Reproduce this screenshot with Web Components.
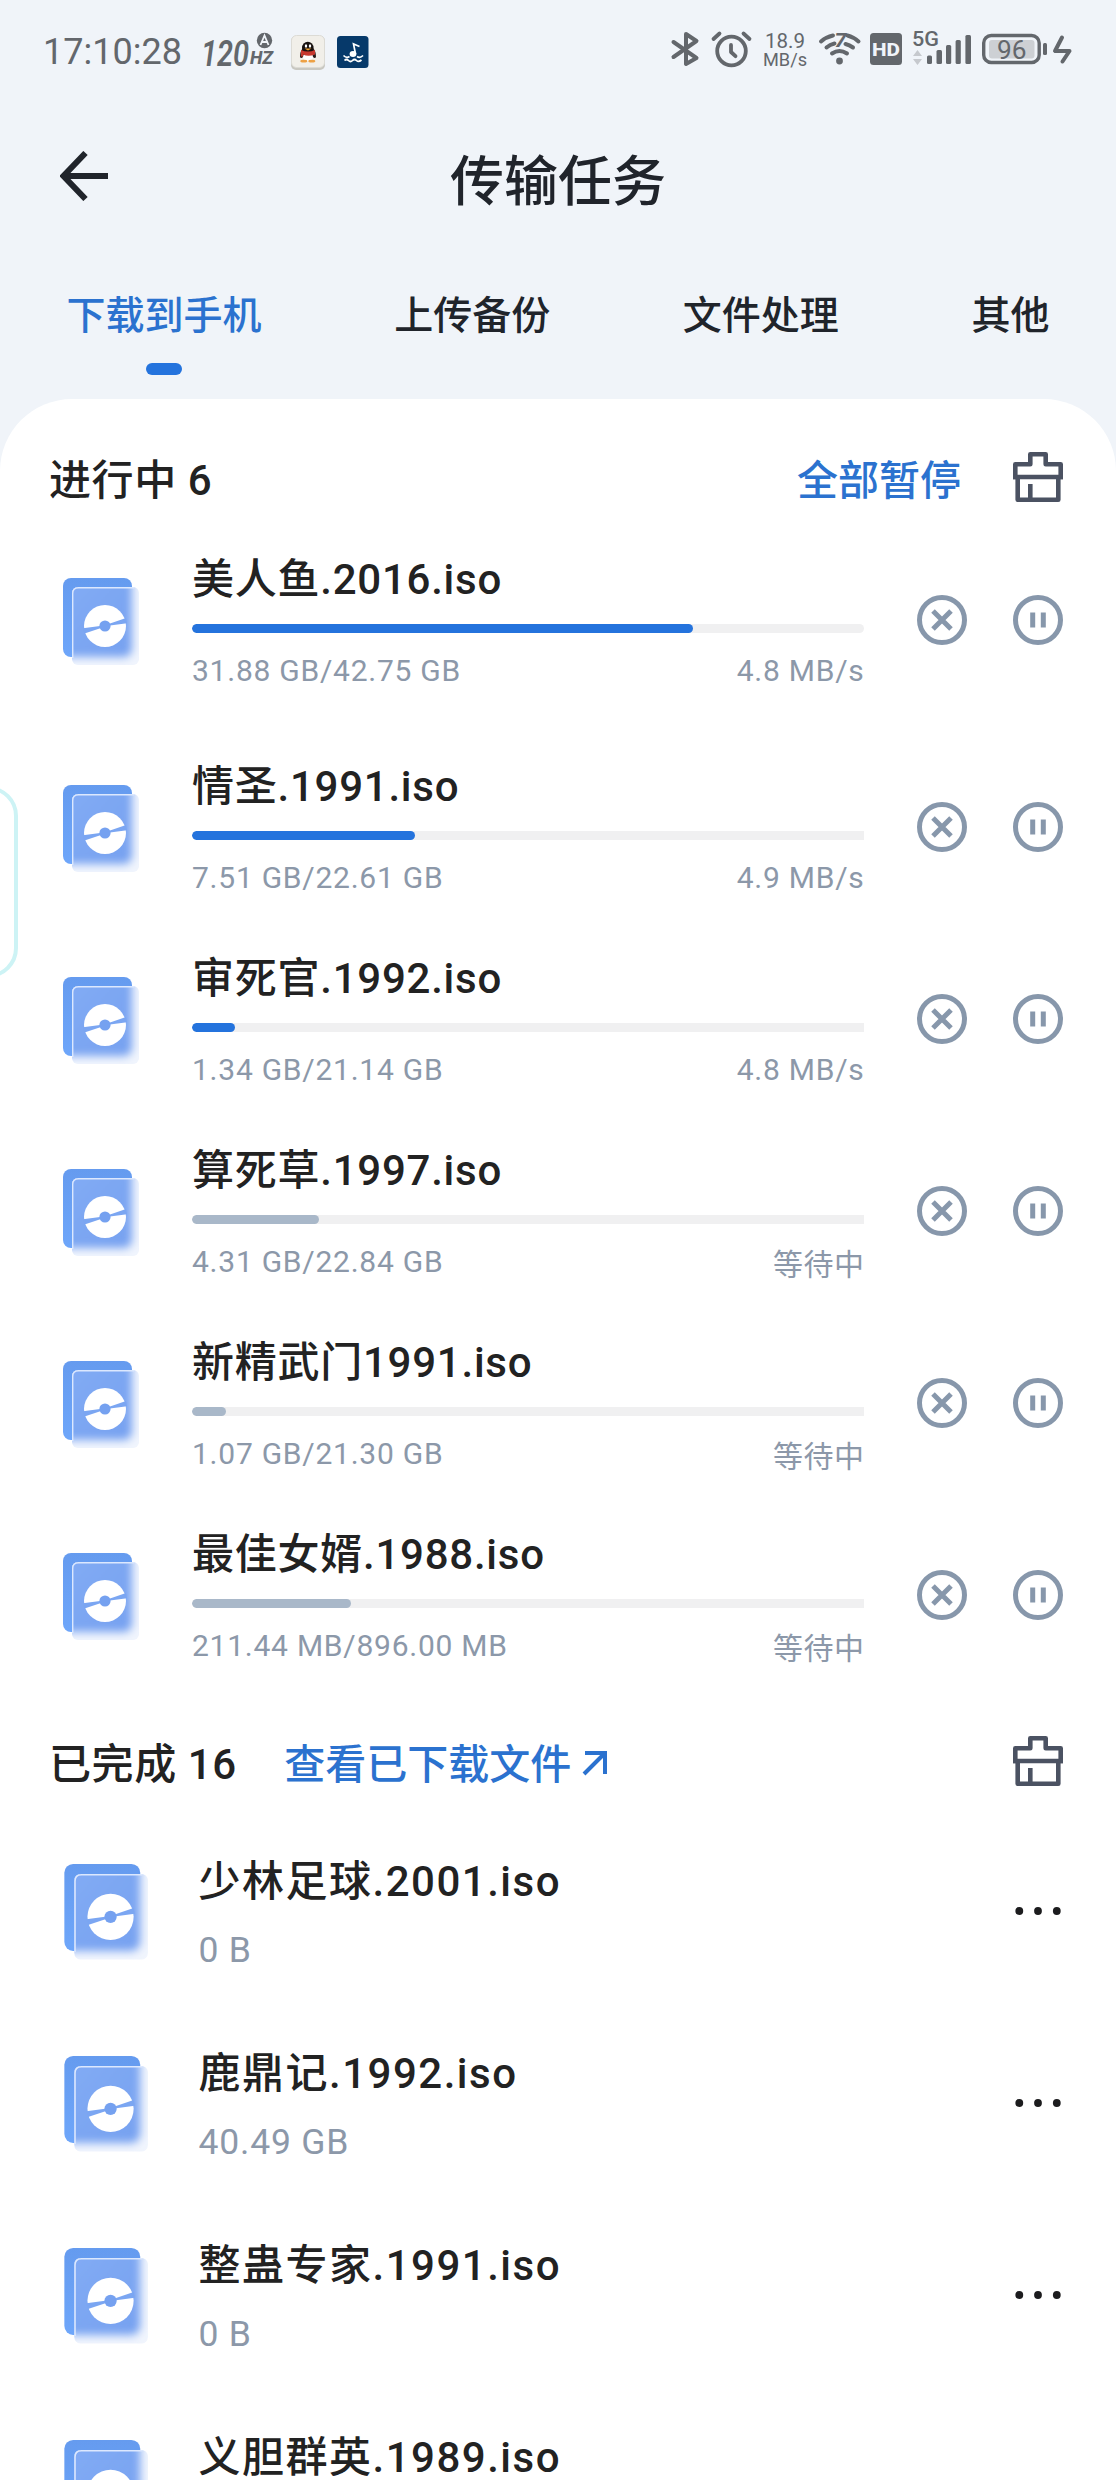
<!DOCTYPE html>
<html lang="zh-CN">
<head>
<meta charset="utf-8">
<title>传输任务</title>
<style>
html,body{margin:0;padding:0}
body{width:1116px;height:2480px;overflow:hidden;background:#f0f4f9;font-family:Roboto,"Noto Sans CJK SC",sans-serif;color:#222;position:relative}
</style>
</head>
<body>
<transfer-app></transfer-app>
<script>
const define = (name, html) => {
  const t = document.createElement('template');
  t.innerHTML = html;
  customElements.define(name, class extends HTMLElement {
    constructor() {
      super();
      this.attachShadow({mode: 'open'}).append(t.content.cloneNode(true));
    }
    connectedCallback() {
      const p = this.getAttribute('progress');
      if (p) this.style.setProperty('--p', p + '%');
    }
  });
};

define('status-bar', `
<style>
:host{display:flex;justify-content:space-between;height:100px;color:#63676c}
svg{display:block;font-family:Roboto,sans-serif}
</style>
<svg width="400" height="100" viewBox="0 0 400 100" fill="#63676c">
  <text x="43" y="64" font-size="36.5" textLength="139" lengthAdjust="spacingAndGlyphs">17:10:28</text>
  <text x="201" y="65.500" font-size="37" font-weight="600" font-style="italic" textLength="48" lengthAdjust="spacingAndGlyphs">120</text>
  <text x="250" y="64" font-size="18" font-weight="800" font-style="italic" textLength="23" lengthAdjust="spacingAndGlyphs">HZ</text>
  <circle cx="264.500" cy="40.500" r="7.700"/>
  <path d="M260.500 45L264.500 35.500L268.500 45M262 42H267" fill="none" stroke="#f0f4f9" stroke-width="1.800"/>
  <rect x="291" y="36" width="34" height="34" rx="5" fill="#c9c8c1"/>
  <rect x="291.500" y="35.500" width="33" height="32" rx="5" fill="#f1efe9" stroke="#dcdbd5"/>
  <g>
    <path d="M300 57q0-6 3-9h10q3 3 3 9q-1 2-3 0h-10q-2 2-3 0z" fill="#2a1a18"/>
    <ellipse cx="307.800" cy="48" rx="5.800" ry="6.300" fill="#17110f"/>
    <ellipse cx="308" cy="57" rx="5" ry="4.500" fill="#fff"/>
    <ellipse cx="306" cy="46" rx="1.200" ry="1.800" fill="#fff"/><ellipse cx="310" cy="46" rx="1.200" ry="1.800" fill="#fff"/>
    <path d="M301 50q7 3 14 0v4.500q-7 2.500-12 0v2h-2z" fill="#c8392f"/>
    <path d="M304.500 48.500h7l-3.500 2z" fill="#f0a030"/>
    <ellipse cx="303.800" cy="61.200" rx="3.500" ry="1.400" fill="#eda144"/><ellipse cx="311.800" cy="61.200" rx="3.500" ry="1.400" fill="#eda144"/>
  </g>
  <rect x="337" y="36" width="31.500" height="32" rx="3.500" fill="#06396a"/>
  <g fill="none" stroke="#fff" stroke-width="1.700">
    <path d="M355.500 54L353.500 44L359.500 46.500"/>
    <path d="M343.500 55.500q3 3 6 1M357 56.500q3 2 6-1M344.500 60.500q2-2 4 0t4 0t4 0t5-.5"/>
  </g>
  <ellipse cx="353" cy="54" rx="3.400" ry="2.900" fill="#fff"/>
</svg>
<svg width="476" height="100" viewBox="640 0 476 100" fill="#63676c">
  <path d="M673.500 42L696.500 58L686 64V34L696.500 41L673.500 57" fill="none" stroke="#63676c" stroke-width="4" stroke-linejoin="round" stroke-linecap="round"/>
  <g fill="none" stroke="#63676c" stroke-width="3.800" stroke-linecap="round" stroke-linejoin="round">
    <circle cx="731.500" cy="51" r="14.300"/><path d="M731 45v7l4.500 4.200M713.500 39l6-5.500M749.500 39l-6-5.500"/>
  </g>
  <text x="765" y="48" font-size="20" textLength="40" lengthAdjust="spacingAndGlyphs">18.9</text>
  <text x="763" y="65.500" font-size="18" textLength="44" lengthAdjust="spacingAndGlyphs">MB/s</text>
  <g fill="none" stroke="#63676c" stroke-width="4" stroke-linecap="round">
    <path d="M821 41.500q5-4.500 12-6M847.500 35.500q6 1.500 11 6M826.500 47.500q3.500-3 8-4M845.500 44q4 1 7.500 3.500M832 53.500q7.500-5 15 0"/>
  </g>
  <circle cx="839.500" cy="61" r="3.400"/>
  <text x="834.500" y="46.500" font-size="20" font-weight="800" font-style="italic" textLength="12" lengthAdjust="spacingAndGlyphs">7</text>
  <rect x="870" y="33" width="32" height="32" rx="3.500"/>
  <text x="872" y="56" font-size="19" font-weight="800" fill="#f0f4f9" textLength="28" lengthAdjust="spacingAndGlyphs">HD</text>
  <text x="912" y="46" font-size="20" font-weight="500" textLength="27" lengthAdjust="spacingAndGlyphs">5G</text>
  <path d="M913 56l4.500-6l4.500 6zM913 59h9l-4.500 6z" fill="#c6c9ce"/>
  <g><rect x="927" y="55.500" width="5" height="8.500" rx="1.500"/><rect x="936.500" y="50" width="5.500" height="14" rx="1.500"/><rect x="946" y="45" width="5.200" height="19" rx="1.500"/><rect x="955.600" y="40" width="5.200" height="24" rx="1.500"/><rect x="965.400" y="35" width="5.600" height="29" rx="1.500"/></g>
  <rect x="983.700" y="35.500" width="55.500" height="27" rx="7.500" fill="none" stroke="#63676c" stroke-width="3.400"/>
  <rect x="989" y="40" width="45.500" height="18.500" rx="3" fill="#cdd0d4"/>
  <rect x="1043" y="43" width="4" height="12" rx="1.500"/>
  <text x="997" y="58.500" font-size="26" textLength="29.500" lengthAdjust="spacingAndGlyphs">96</text>
  <path d="M1062 37.500l-7 13.500h14.500l-7 10.500" fill="none" stroke="#63676c" stroke-width="4" stroke-linejoin="round" stroke-linecap="round"/>
</svg>`);

define('title-bar', `
<style>
:host{display:grid;grid-template-columns:1fr auto 1fr;align-items:center;height:165px}
svg{display:block;margin:0 0 13px 60px}
h1{margin:0;font-size:54px;line-height:70px;font-weight:500;color:#20242b}
</style>
<svg width="50" height="50" viewBox="0 0 50 50" fill="none" stroke="#20242b" stroke-width="6"><path d="M25.500 2L3.500 25L25.500 48M4 25H48"/></svg>
<h1><slot></slot></h1><span></span>`);

define('tab-item', `
<style>
:host{display:flex;flex-direction:column;align-items:center;font-size:39px;line-height:50px;font-weight:500;color:#20242b;white-space:nowrap}
i{display:none;width:36px;height:12px;border-radius:6px;margin-top:22px;background:#2473dd}
:host([active]){color:#2b72cf}
:host([active]) i{display:block}
</style><span><slot></slot></span><i></i>`);

define('tab-bar', `
<style>
:host{display:flex;justify-content:space-between;align-items:flex-start;box-sizing:border-box;height:134px;padding:26px 66.500px 0 66.500px}
</style><slot></slot>`);

define('clear-icon', `
<style>:host{display:block}svg{display:block}</style>
<svg width="50" height="50" viewBox="0 0 50 50" fill="none" stroke="#4b5262" stroke-width="4.600" stroke-linejoin="round">
<path d="M2.300 27.300V12.300H17.300V2.300H32.700V12.300H47.700V27.300"/><path d="M0 25H50"/><path d="M4.700 25V47.700H45.300V25M17.300 32V47"/></svg>`);

define('section-head', `
<style>
:host{display:flex;align-items:center;box-sizing:border-box;height:156px;padding:0 53px 0 49px;font-size:42px;line-height:50px;font-weight:500}
:host([compact]){height:78px}
.t,.l{padding-top:8px;white-space:nowrap}
.t{color:#222;letter-spacing:.6px}
.l{display:flex;align-items:center;font-size:41px;color:#2b72cf;margin:0 52px 0 auto}
:host([compact]) .l{margin:0 auto 0 47.500px}
</style>
<span class="t"><slot></slot></span><span class="l"><slot name="link"></slot></span><clear-icon></clear-icon>`);

define('disc-icon', `
<style>:host{display:block;width:88px;height:100px}svg{display:block;width:100%;height:100%;overflow:visible}</style>
<svg viewBox="0 0 88 100">
<defs>
<linearGradient id="b" x1="0" y1="0" x2="0" y2="1"><stop offset="0" stop-color="#659bef"/><stop offset="1" stop-color="#6ea6fa"/></linearGradient>
<linearGradient id="f" x1="0" y1="0" x2="1" y2="1"><stop offset="0" stop-color="#84adf5"/><stop offset="1" stop-color="#76a1f0"/></linearGradient>
<filter id="s" x="-20%" y="-20%" width="140%" height="140%"><feGaussianBlur stdDeviation="4"/></filter>
<clipPath id="c"><rect x="19" y="19" width="67" height="78" rx="6"/></clipPath>
</defs>
<rect x="10" y="10" width="69" height="79" rx="8" fill="url(#b)"/>
<g clip-path="url(#c)"><rect x="19" y="19" width="67" height="78" fill="#f1f5fd"/><rect x="5" y="5" width="74" height="84" rx="8" fill="url(#f)" filter="url(#s)"/></g>
<path d="M19.700 90V25.500q0-5.800 5.800-5.800H81" fill="none" stroke="#dce8fe" stroke-width="1.400"/>
<circle cx="52" cy="58" r="21" fill="#fff"/>
<path d="M30 60.200L47 58L48 60L31.500 65.500ZM57 55.500L73 50L74 55.300L57 57.500Z" fill="#7ba6f2"/>
<circle cx="52" cy="58" r="5.600" fill="#75a1f0"/>
</svg>`);

define('transfer-row', `
<style>
:host{display:flex;align-items:flex-start;height:192px;--c:#2473dd}
:host([waiting]){--c:#a9b8c9}
:host(:first-of-type){margin-bottom:15px}
disc-icon{margin:13px 51px 0 53px;flex:none}
.m{width:672px;flex:none}
.n{font-size:42px;line-height:50px;font-weight:500;letter-spacing:.750px;color:#222;white-space:nowrap}
.b{height:9px;margin:19px 0 18px;border-radius:4.500px 0 0 4.500px;background:#f0f0f1;overflow:hidden}
:host(:first-of-type) .b{border-radius:4.500px}
.b i{display:block;height:9px;width:var(--p);border-radius:4.500px;background:var(--c)}
.s{display:flex;justify-content:space-between;font-size:30px;line-height:40px;letter-spacing:.75px;color:#8c98a9;white-space:nowrap}
.s span:last-child{margin-right:-.5px}
:host([waiting]) .s span:last-child{letter-spacing:.5px;padding-top:3px;height:37px}
.a{display:block;flex:none;margin:40px 0 0 53px}
</style>
<disc-icon></disc-icon>
<div class="m"><div class="n"><slot></slot></div><div class="b"><i></i></div>
<div class="s"><span><slot name="size"></slot></span><span><slot name="state"></slot></span></div></div>
<svg class="a" width="146" height="50" viewBox="0 0 146 50" fill="none" stroke="#8797ab" stroke-width="5"><circle cx="25" cy="25" r="22.500"/><path d="M16 16L34 34M34 16L16 34"/><circle cx="121" cy="25" r="22.500"/><path d="M115.700 17.500V32.500M126.300 17.500V32.500"/></svg>`);

define('done-row', `
<style>
:host{display:flex;align-items:flex-start;height:192px}
disc-icon{width:97.500px;height:110px;margin:-4px 48px 0 53px;flex:none}
.m{flex:1}
.n{font-size:42px;line-height:50px;font-weight:500;letter-spacing:1.500px;color:#222;white-space:nowrap}
.s{margin-top:23px;font-size:35.500px;line-height:40px;letter-spacing:.8px;color:#8c98a9;white-space:nowrap}
svg{display:block;flex:none;margin:49px 53px 0 0}
</style>
<disc-icon></disc-icon><div class="m"><div class="n"><slot></slot></div><div class="s"><slot name="size"></slot></div></div>
<svg width="50" height="10" viewBox="0 0 50 10" fill="#1c1c1e"><circle cx="6.300" cy="5" r="3.900"/><circle cx="25" cy="5" r="3.900"/><circle cx="43.800" cy="5" r="3.900"/></svg>`);

/* system side-panel handle floating at the screen edge */
define('edge-handle', `
<style>:host{display:block;box-sizing:border-box;position:absolute;left:-42px;top:786px;width:60px;height:192px;border:4px solid #cdf3f5;border-radius:30px}</style>`);

define('transfer-app', `
<style>
:host{display:block}
main{background:#fff;border-radius:72px 72px 0 0;height:2081px;overflow:hidden}
.done{padding-top:57px}
.go{display:block;margin:-5px 0 0 11px}
</style>
<status-bar></status-bar>
<title-bar>传输任务</title-bar>
<tab-bar><tab-item active>下载到手机</tab-item><tab-item>上传备份</tab-item><tab-item>文件处理</tab-item><tab-item>其他</tab-item></tab-bar>
<main>
<section-head>进行中 6<span slot="link">全部暂停</span></section-head>
<section>
<transfer-row progress="74.57">美人鱼.2016.iso<span slot="size">31.88 GB/42.75 GB</span><span slot="state">4.8 MB/s</span></transfer-row>
<transfer-row progress="33.2">情圣.1991.iso<span slot="size">7.51 GB/22.61 GB</span><span slot="state">4.9 MB/s</span></transfer-row>
<transfer-row progress="6.34">审死官.1992.iso<span slot="size">1.34 GB/21.14 GB</span><span slot="state">4.8 MB/s</span></transfer-row>
<transfer-row waiting progress="18.87">算死草.1997.iso<span slot="size">4.31 GB/22.84 GB</span><span slot="state">等待中</span></transfer-row>
<transfer-row waiting progress="5.02">新精武门1991.iso<span slot="size">1.07 GB/21.30 GB</span><span slot="state">等待中</span></transfer-row>
<transfer-row waiting progress="23.6">最佳女婿.1988.iso<span slot="size">211.44 MB/896.00 MB</span><span slot="state">等待中</span></transfer-row>
</section>
<section-head compact>已完成 16<span slot="link">查看已下载文件</span><svg slot="link" class="go" width="26" height="26" viewBox="0 0 26 26" fill="none" stroke="#2b72cf" stroke-width="4"><path d="M3 3H23V24M23 3L2 24"/></svg></section-head>
<section class="done">
<done-row>少林足球.2001.iso<span slot="size">0 B</span></done-row>
<done-row>鹿鼎记.1992.iso<span slot="size">40.49 GB</span></done-row>
<done-row>整蛊专家.1991.iso<span slot="size">0 B</span></done-row>
<done-row>义胆群英.1989.iso<span slot="size">0 B</span></done-row>
</section>
</main>
<edge-handle></edge-handle>`);
</script>
</body>
</html>
